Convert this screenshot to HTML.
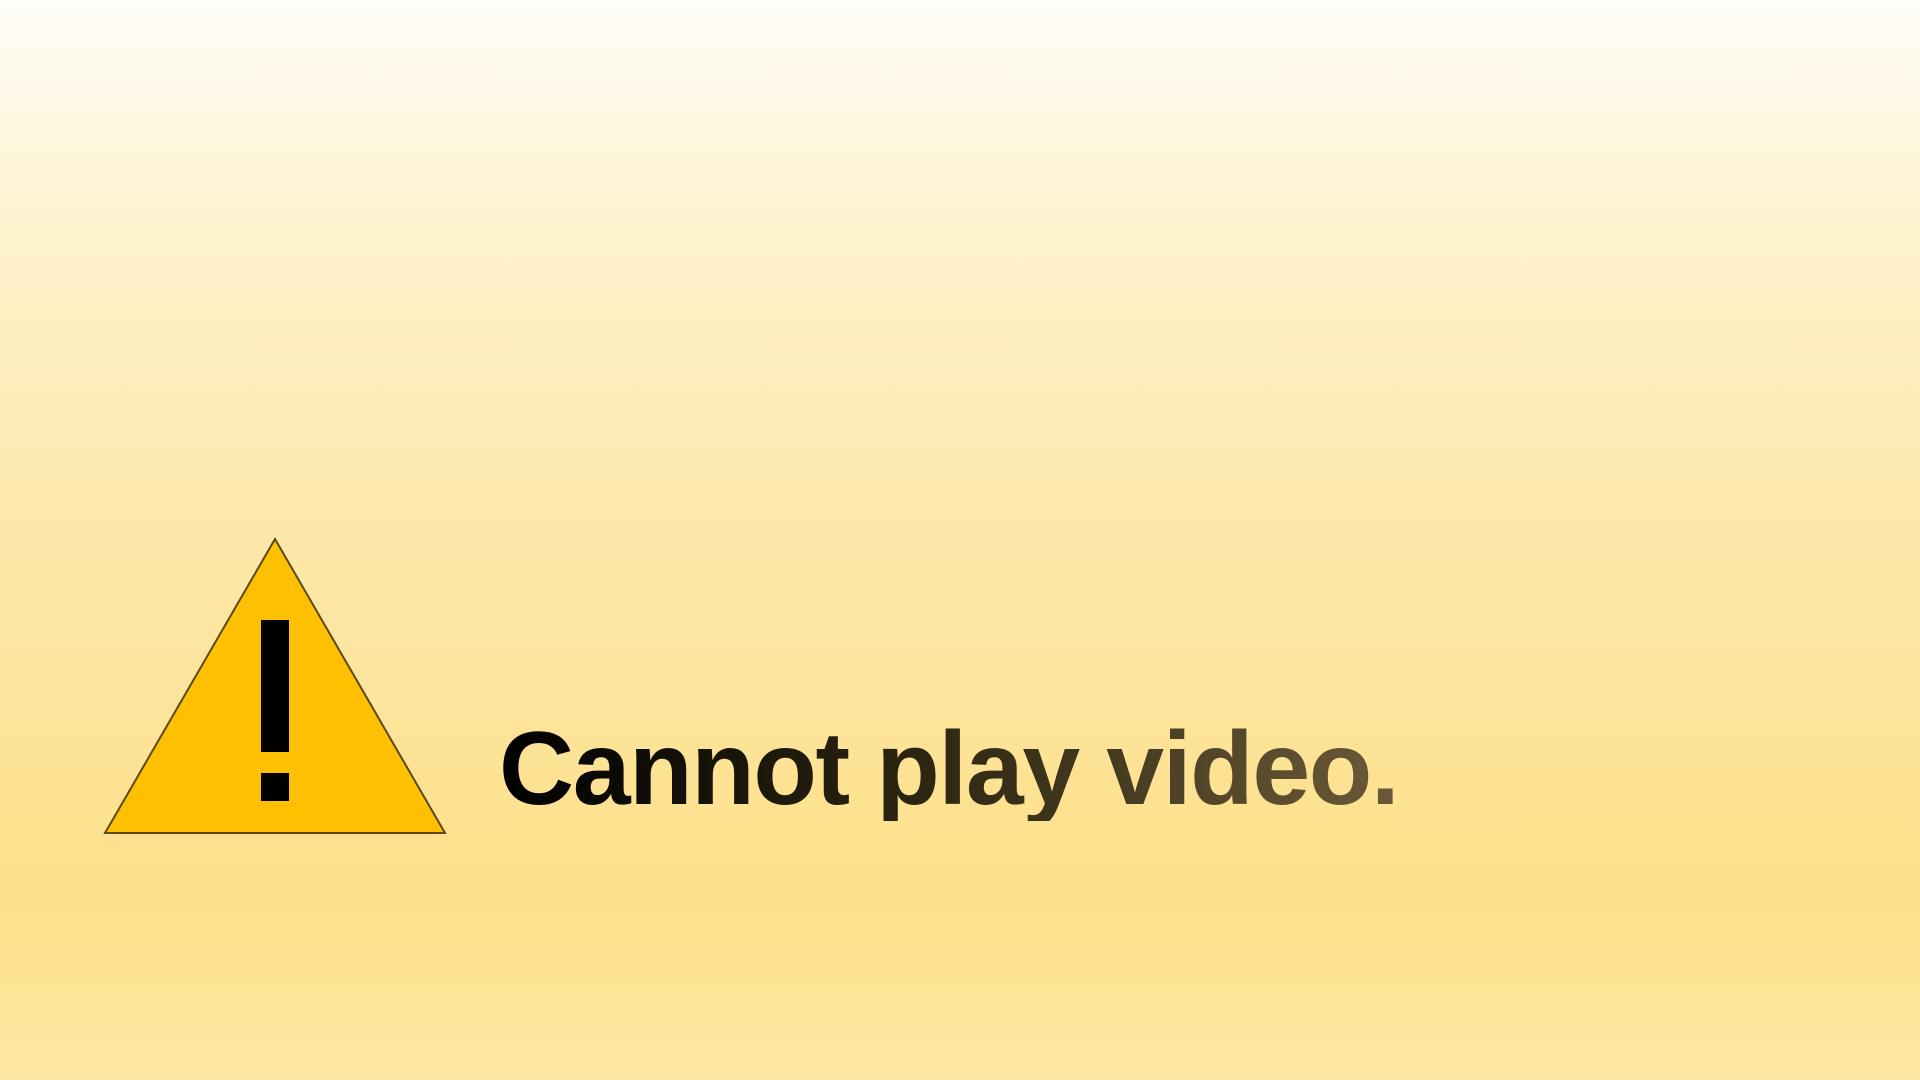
<!DOCTYPE html>
<html><head><meta charset="utf-8"><style>
html,body{margin:0;padding:0;width:1920px;height:1080px;overflow:hidden}
body{background:linear-gradient(to bottom,#fffdf9 0%,#fef3d0 20%,#fdebb5 40%,#fde49b 65%,#fde08a 83%,#fee7a2 100%);position:relative;font-family:"Liberation Sans",sans-serif}
svg{position:absolute;left:0;top:0}
.t{position:absolute;left:499px;top:717px;font-size:104px;font-weight:bold;line-height:1;white-space:nowrap;
background:linear-gradient(to right,#000 0%,#2a2410 45%,#6b5a38 100%);-webkit-background-clip:text;background-clip:text;color:transparent;letter-spacing:-1.4px}
</style></head><body>
<svg width="1920" height="1080">
<polygon points="275,539 445,833 105,833" fill="#fec000" stroke="#5a4a1a" stroke-width="2"/>
<rect x="261" y="620" width="28" height="132" fill="#000"/>
<rect x="261" y="773" width="28" height="28" fill="#000"/>
</svg>
<div class="t">Cannot play video.</div>
</body></html>
